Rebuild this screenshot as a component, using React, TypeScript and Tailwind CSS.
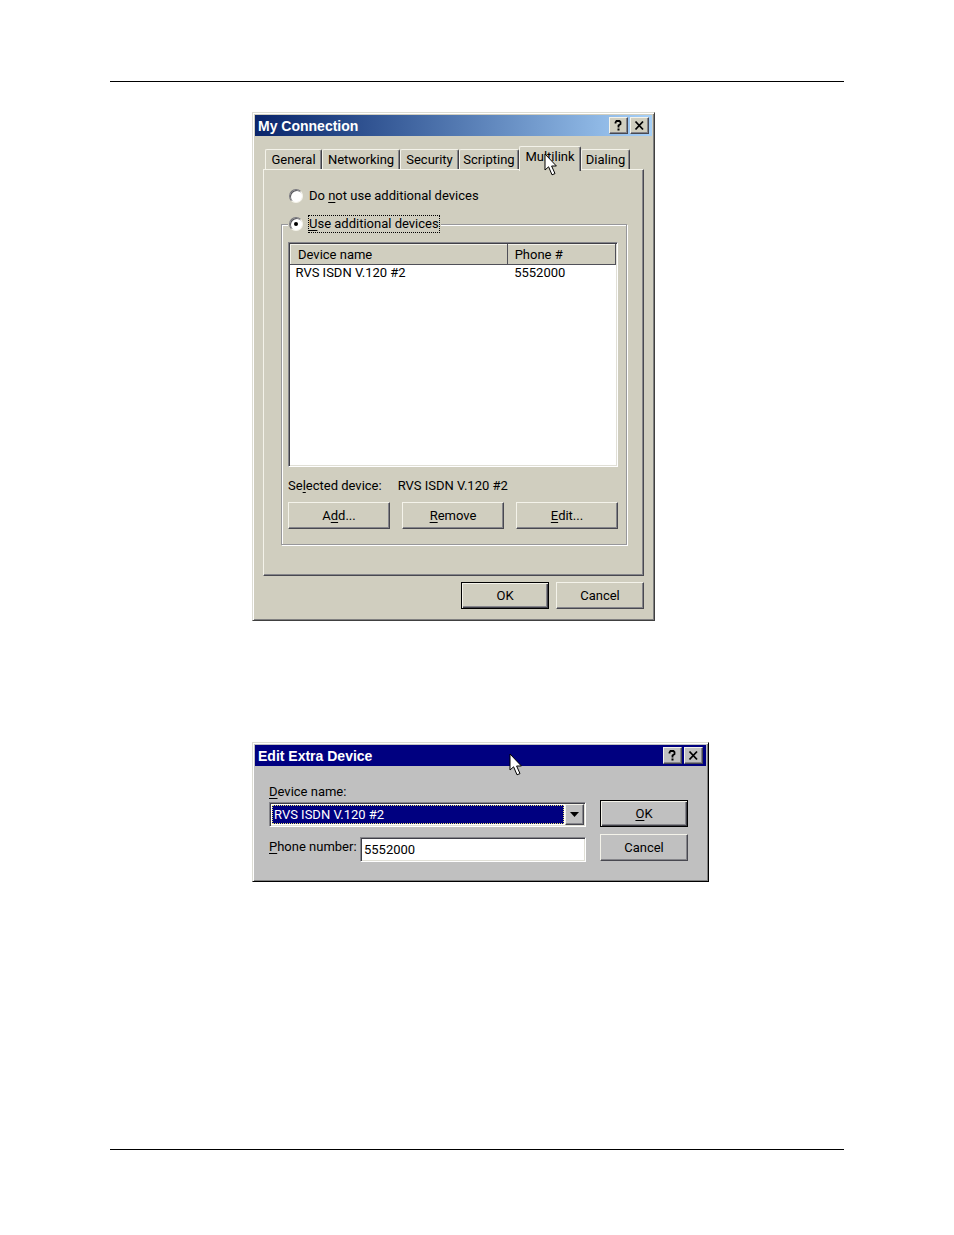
import { useState } from 'react';
import type { ReactNode } from 'react';
import clsx from 'clsx';

const raised =
  'border border-t-[#f4f3ea] border-l-[#f4f3ea] border-r-[#484850] border-b-[#484850] shadow-[inset_-1px_-1px_0_#85858a]';
const sunken =
  'border border-t-[#85858a] border-l-[#85858a] border-r-white border-b-white shadow-[inset_1px_1px_0_#404048,inset_-1px_-1px_0_#e0dfd6]';

const tabs = [
  { name: 'General', width: 'w-[57px]' },
  { name: 'Networking', width: 'w-[78px]' },
  { name: 'Security', width: 'w-[59px]' },
  { name: 'Scripting', width: 'w-[60px]' },
  { name: 'Multilink', width: 'w-[62px]' },
  { name: 'Dialing', width: 'w-[49px]' },
];

const devices = [{ name: 'RVS ISDN V.120 #2', phone: '5552000' }];

function Cursor({ className }: { className: string }) {
  return (
    <svg
      className={clsx('pointer-events-none absolute z-10', className)}
      width="14"
      height="24"
      viewBox="0 0 14 24"
      aria-hidden="true"
    >
      <path
        d="M1 1V17L4.6 13.8L8 21.8L11 20.6L7.6 13H12.4Z"
        fill="white"
        stroke="black"
        strokeWidth="1"
      />
    </svg>
  );
}

function PushButton({
  children,
  primary,
  className,
}: {
  children: ReactNode;
  primary?: boolean;
  className?: string;
}) {
  return (
    <button
      type="button"
      className={clsx(
        'flex h-[27px] items-center justify-center',
        primary
          ? 'border border-black shadow-[inset_1px_1px_0_#f4f3ea,inset_-1px_-1px_0_#404048,inset_-2px_-2px_0_#85858a]'
          : raised,
        className,
      )}
    >
      <span>{children}</span>
    </button>
  );
}

function CaptionButton({ label, children }: { label: string; children: ReactNode }) {
  return (
    <button
      type="button"
      aria-label={label}
      className={clsx('flex h-[17px] w-[19px] items-center justify-center', raised)}
    >
      <svg width="11" height="11" viewBox="0 0 11 11" fill="none" stroke="black" strokeWidth="1.8">
        {children}
      </svg>
    </button>
  );
}

function Dialog({
  title,
  className,
  barClassName,
  buttonClassName,
  cursor,
  children,
}: {
  title: string;
  className: string;
  barClassName: string;
  buttonClassName: string;
  cursor?: ReactNode;
  children: ReactNode;
}) {
  return (
    <section
      aria-label={title}
      className={clsx(
        'w-full border border-t-[#dcdcd4] border-l-[#dcdcd4] p-0.5 shadow-[inset_1px_1px_0_white,inset_-1px_-1px_0_#808080]',
        className,
      )}
    >
      <header className={clsx('relative flex h-[21px] items-center px-[3px]', barClassName)}>
        <h2 className="flex-1 font-['Liberation_Sans',sans-serif] text-[14px] leading-5 font-bold text-white">
          {title}
        </h2>
        <div className={clsx('flex gap-0.5', buttonClassName)}>
          <CaptionButton label="Help">
            <path d="M2.5 3.5V2.5L3.5 1H6.5L7.5 2V4L5.5 5.5V7.5M4.5 9.5H6.5" />
          </CaptionButton>
          <CaptionButton label="Close">
            <path d="M1.5 1.5L9 9.5M9 1.5L1.5 9.5" />
          </CaptionButton>
        </div>
        {cursor}
      </header>
      {children}
    </section>
  );
}

const radioClass =
  "flex size-[14px] shrink-0 appearance-none items-center justify-center rounded-full border border-t-[#77777c] border-l-[#77777c] border-r-[#f4f3ea] border-b-[#f4f3ea] bg-white shadow-[inset_1px_1px_0_#55555a] checked:before:size-1 checked:before:rounded-full checked:before:bg-black checked:before:content-['']";

function ConnectionDialog() {
  const [tab, setTab] = useState('Multilink');
  const [additional, setAdditional] = useState(true);

  return (
    <Dialog
      title="My Connection"
      className="max-w-[403px] border-r-[#404040] border-b-[#404040] bg-[#d0cebf]"
      barClassName="bg-linear-to-r from-[#0a246a] to-[#a6d0f8]"
      buttonClassName="[&>button]:bg-[#d0cebf]"
    >
      <div className="px-2 pt-[10px] pb-[9px]">
        <div role="tablist" className="flex h-[23px] items-end px-0.5">
          {tabs.map(({ name, width }) => (
            <button
              key={name}
              type="button"
              role="tab"
              aria-selected={tab === name}
              onClick={() => setTab(name)}
              className={clsx(
                'relative shrink-0 rounded-t-xs border border-b-0 border-t-[#f4f3ea] border-l-[#f4f3ea] border-r-[#404048] bg-[#d0cebf] shadow-[inset_-1px_0_0_#85858a]',
                width,
                tab === name ? 'z-10 -mb-0.5 h-[25px] pb-1' : 'h-5',
              )}
            >
              {name}
              {name === 'Multilink' && <Cursor className="top-1.5 left-6" />}
            </button>
          ))}
        </div>

        <div role="tabpanel" className={clsx('pt-4 pr-4 pb-[30px] pl-[17px]', raised)}>
          <label className="flex h-5 items-center gap-1.5 pl-2">
            <input
              type="radio"
              name="devices"
              className={radioClass}
              checked={!additional}
              onChange={() => setAdditional(false)}
            />
            <span>
              Do <u>n</u>ot use additional devices
            </span>
          </label>

          <fieldset className="mt-2 border border-[#97979a] pr-2 pb-[15px] pl-1.5 shadow-[1px_1px_0_white,inset_1px_1px_0_white]">
            <legend className="bg-[#d0cebf] px-px">
              <label className="flex h-5 items-center gap-[5px]">
                <input
                  type="radio"
                  name="devices"
                  className={radioClass}
                  checked={additional}
                  onChange={() => setAdditional(true)}
                />
                <span className="border border-dotted border-black">
                  <u>U</u>se additional devices
                </span>
              </label>
            </legend>

            <div className={clsx('mt-2 h-[225px] bg-white p-px', sunken)}>
              <table className="w-full table-fixed border-collapse text-left">
                <thead>
                  <tr className="h-5 bg-[#d0cebf]">
                    <th
                      scope="col"
                      className="w-2/3 border border-t-[#f4f3ea] border-r-[#505058] border-b-[#505058] border-l-[#f4f3ea] pl-[7px] font-normal"
                    >
                      Device name
                    </th>
                    <th
                      scope="col"
                      className="border border-t-[#f4f3ea] border-r-[#505058] border-b-[#505058] pl-[7px] font-normal"
                    >
                      Phone #
                    </th>
                  </tr>
                </thead>
                <tbody>
                  {devices.map((device) => (
                    <tr key={device.name}>
                      <td className="pl-[5px]">{device.name}</td>
                      <td className="pl-[7px]">{device.phone}</td>
                    </tr>
                  ))}
                </tbody>
              </table>
            </div>

            <p className="mt-[9px] flex h-5 items-center gap-4">
              <span>
                Se<u>l</u>ected device:
              </span>
              <span>{devices[0].name}</span>
            </p>

            <div className="mt-1.5 flex justify-between">
              <PushButton className="w-[102px]">
                A<u>d</u>d...
              </PushButton>
              <PushButton className="w-[102px]">
                <u>R</u>emove
              </PushButton>
              <PushButton className="w-[102px]">
                <u>E</u>dit...
              </PushButton>
            </div>
          </fieldset>
        </div>

        <div className="mt-1.5 flex justify-end gap-[7px]">
          <PushButton primary className="w-[88px]">
            OK
          </PushButton>
          <PushButton className="w-[88px]">Cancel</PushButton>
        </div>
      </div>
    </Dialog>
  );
}

function EditDeviceDialog() {
  const [phone, setPhone] = useState('5552000');

  return (
    <Dialog
      title="Edit Extra Device"
      className="max-w-[457px] border-r-black border-b-black bg-[#c0c0c0]"
      barClassName="bg-[#000080]"
      buttonClassName="[&>button]:bg-[#c0c0c0]"
      cursor={<Cursor className="top-2 left-[254px]" />}
    >
      <div className="flex gap-[14px] pt-4 pr-[18px] pb-[17px] pl-[14px]">
        <div className="min-w-0 flex-1">
          <label htmlFor="device" className="block h-5 leading-5">
            <u>D</u>evice name:
          </label>
          <div className={clsx('flex h-[25px] bg-white p-px', sunken)}>
            <select
              id="device"
              className="m-px min-w-0 flex-1 appearance-none border border-dotted border-[#e8e070] bg-[#000080] pl-px text-white"
            >
              {devices.map((device) => (
                <option key={device.name}>{device.name}</option>
              ))}
            </select>
            <span
              className={clsx('pointer-events-none flex w-[19px] items-center justify-center bg-[#c0c0c0]', raised)}
            >
              <svg width="9" height="5" viewBox="0 0 9 5" aria-hidden="true">
                <path d="M0 0H9L4.5 5Z" fill="black" />
              </svg>
            </span>
          </div>
          <div className="mt-2.5 flex">
            <label htmlFor="phone" className="w-[91px] shrink-0 leading-5">
              <u>P</u>hone number:
            </label>
            <input
              id="phone"
              type="text"
              value={phone}
              onChange={(e) => setPhone(e.target.value)}
              className={clsx('h-[25px] min-w-0 flex-1 bg-white pl-[3px]', sunken)}
            />
          </div>
        </div>
        <div className="flex w-[88px] flex-col gap-[7px] pt-[18px]">
          <PushButton primary>
            <u>O</u>K
          </PushButton>
          <PushButton>Cancel</PushButton>
        </div>
      </div>
    </Dialog>
  );
}

export default function App() {
  return (
    <main className="min-h-screen bg-white px-[110px] pt-[81px] pb-[85px] font-['Roboto',sans-serif] text-[13px] leading-4 text-black [&_u]:underline-offset-2">
      <div className="border-y border-black pt-[30px] pb-[267px] pl-[142px]">
        <ConnectionDialog />
        <div className="mt-[121px]">
          <EditDeviceDialog />
        </div>
      </div>
    </main>
  );
}
